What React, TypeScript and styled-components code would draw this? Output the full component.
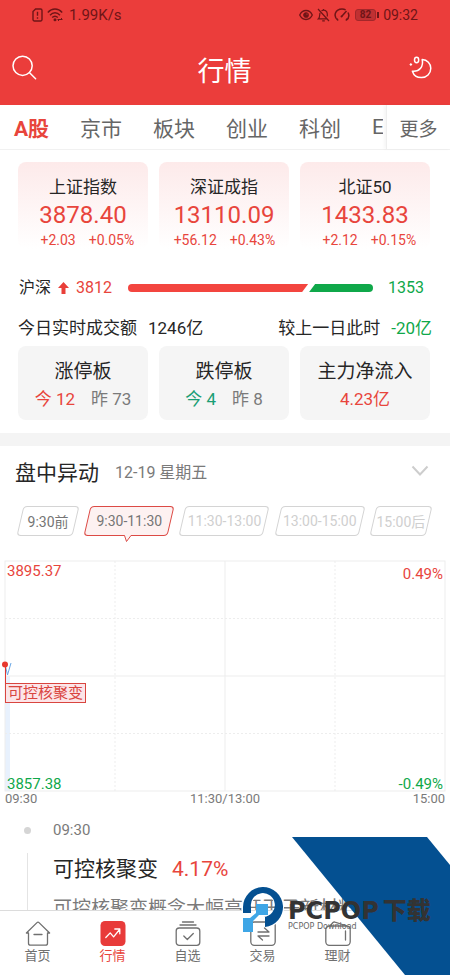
import React from "react";
import styled, { createGlobalStyle } from "styled-components";

const RED = "#e8453c";
const GREEN = "#0fa84a";
const INK = "#262626";
const GREY = "#7a7a7a";

const GlobalStyle = createGlobalStyle`
  *, *::before, *::after { box-sizing: border-box; }
  body {
    margin: 0;
    background: #fff;
    color: ${INK};
    font-family: Roboto, "Noto Sans CJK SC", sans-serif;
  }
  button {
    margin: 0;
    padding: 0;
    border: 0;
    background: none;
    color: inherit;
    font: inherit;
    cursor: pointer;
  }
  h1, h2, h3, p { margin: 0; font-weight: 400; }
  svg { display: block; }
`;

const Screen = styled.div`
  position: relative;
  display: flex;
  flex-direction: column;
  height: 100vh;
  overflow: hidden;
`;

/* ---------- header ---------- */

const Header = styled.header`
  flex: none;
  background: #eb3d3b;
`;

const StatusBar = styled.div`
  display: flex;
  justify-content: space-between;
  height: 30px;
  padding: 0 32px;
  color: #6f1517;
`;

const StatusGroup = styled.div<{ $small?: boolean }>`
  display: flex;
  align-items: center;
  gap: 4px;
  font-size: ${(p) => (p.$small ? 14 : 15)}px;
`;

const StatusText = styled.span`
  padding-left: 2px;
`;

const TitleBar = styled.div`
  display: flex;
  align-items: center;
  justify-content: space-between;
  height: 75px;
  padding: 0 18px 0 12px;
  color: #fff;
`;

const Title = styled.h1`
  padding: 8px 0 0 2px;
  font-size: 27px;
  line-height: 36px;
`;

/* ---------- tabs ---------- */

const TabBar = styled.nav`
  display: flex;
  flex: none;
  height: 45px;
  border-bottom: 1px solid #f1f1f1;
`;

const TabList = styled.div`
  display: flex;
  flex: 1;
  gap: 31px;
  min-width: 0;
  margin-right: 3px;
  padding-left: 14px;
  overflow: hidden;
`;

const Tab = styled.button<{ $active?: boolean }>`
  flex: none;
  color: ${(p) => (p.$active ? RED : "#666")};
  font-size: 21px;
  font-weight: ${(p) => (p.$active ? 700 : 400)};
`;

const MoreTab = styled.button`
  flex: none;
  width: 64px;
  border-left: 1px solid #eee;
  box-shadow: -2px 0 3px rgba(0, 0, 0, 0.04);
  color: #666;
  font-size: 19px;
`;

/* ---------- market overview ---------- */

const Main = styled.main`
  flex: 1;
  min-height: 0;
  overflow: hidden;
`;

const Overview = styled.section`
  padding: 12px 20px 13px 18px;
`;

const CardRow = styled.div`
  display: grid;
  grid-template-columns: repeat(3, 1fr);
  gap: 11px;
`;

const IndexCard = styled.article`
  padding-top: 13px;
  border-radius: 8px;
  background: linear-gradient(#fdeaea, #fff);
  text-align: center;
`;

const IndexName = styled.h2`
  font-size: 17px;
  line-height: 24px;
`;

const IndexValue = styled.div`
  color: ${RED};
  font-size: 24px;
  line-height: 32px;
`;

const IndexChange = styled.div`
  display: flex;
  justify-content: center;
  gap: 13px;
  color: ${RED};
  font-size: 14px;
  line-height: 18px;
`;

const ChangeDiff = styled.span`
  min-width: 44px;
  text-align: right;
`;

const BreadthRow = styled.div`
  display: flex;
  align-items: center;
  margin-top: 27px;
  padding: 0 6px 0 1px;
  font-size: 16px;
  line-height: 24px;
`;

const UpCount = styled.span`
  display: flex;
  align-items: center;
  gap: 7px;
  margin: 0 16px 0 7px;
  color: ${RED};
`;

const DownCount = styled.span`
  margin-left: 15px;
  color: ${GREEN};
`;

const Breadth = styled.div`
  display: flex;
  flex: 1;
  gap: 1px;
  height: 8px;
`;

const UpBar = styled.span`
  border-radius: 4px 0 0 4px;
  background: #f3453f;
  clip-path: polygon(0 0, 100% 0, calc(100% - 6px) 100%, 0 100%);
`;

const DownBar = styled.span`
  border-radius: 0 4px 4px 0;
  background: ${GREEN};
  clip-path: polygon(6px 0, 100% 0, 100% 100%, 0 100%);
`;

const TurnoverRow = styled.div`
  display: flex;
  justify-content: space-between;
  margin: 16px -2px 6px 0;
  font-size: 17px;
  line-height: 24px;
`;

const Pair = styled.span`
  display: flex;
  gap: 11px;
`;

const StatCard = styled.article`
  padding: 14px 0 9px;
  border-radius: 8px;
  background: #f5f5f5;
  text-align: center;
`;

const StatName = styled.h3`
  font-size: 19px;
  line-height: 24px;
`;

const StatValues = styled.div`
  display: flex;
  justify-content: center;
  gap: 16px;
  margin-top: 3px;
  font-size: 17px;
  line-height: 24px;
`;

const Tone = styled.span<{ $color: string }>`
  color: ${(p) => p.$color};
`;

const Band = styled.div`
  height: 13px;
  background: #f4f4f4;
`;

/* ---------- intraday moves ---------- */

const SectionHead = styled.div`
  display: flex;
  align-items: center;
  height: 50px;
  padding: 0 21px 0 15px;
`;

const SectionTitle = styled.h2`
  font-size: 21px;
`;

const SectionDate = styled.span`
  flex: 1;
  margin-left: 16px;
  color: ${GREY};
  font-size: 16px;
`;

const ChipRow = styled.div`
  display: grid;
  grid-template-columns: 2fr 3fr 3fr 3fr 2fr;
  gap: 11px;
  padding: 10px 21px 0 20px;
`;

const Chip = styled.button<{ $state: "past" | "active" | "idle" }>`
  position: relative;
  z-index: 0;
  height: 30px;
  color: ${(p) => (p.$state === "idle" ? "#cfcfcf" : "#757575")};
  font-size: 14px;
  white-space: nowrap;

  &::before {
    content: "";
    position: absolute;
    inset: 0;
    z-index: -1;
    border: 1px solid ${(p) => (p.$state === "active" ? "#dc4a45" : "#d4d4d4")};
    border-radius: 4px;
    background: ${(p) => (p.$state === "active" ? "#fdf1f1" : "#fff")};
    transform: skewX(-13deg);
  }
`;

const ChipPointer = styled.svg`
  position: absolute;
  top: 28px;
  left: 50%;
  margin-left: -7px;
`;

const Chart = styled.figure`
  margin: 25px 5px 0;
`;

const Plot = styled.div`
  position: relative;
  height: 230px;
`;

const PlotSvg = styled.svg`
  width: 100%;
  height: 100%;
  overflow: visible;
`;

const PlotLabels = styled.div<{ $side: "left" | "right" }>`
  position: absolute;
  top: ${(p) => (p.$side === "left" ? 1 : 4)}px;
  bottom: -2px;
  ${(p) => p.$side}: 2px;
  display: flex;
  flex-direction: column;
  justify-content: space-between;
  font-size: 15px;
  line-height: 18px;
  text-align: ${(p) => p.$side};
`;

const PlotTag = styled.span`
  position: absolute;
  top: 122px;
  left: 0;
  padding: 0 2px;
  border: 1px solid #d9453f;
  background: rgba(252, 226, 230, 0.9);
  color: #d9453f;
  font-size: 15px;
  line-height: 18px;
`;

const TimeAxis = styled.figcaption`
  display: flex;
  justify-content: space-between;
  color: ${GREY};
  font-size: 13px;
  line-height: 16px;
`;

const Event = styled.article`
  display: grid;
  grid-template-columns: 7px 1fr;
  column-gap: 22px;
  margin-top: 13px;
  padding: 0 20px 0 24px;
`;

const Rail = styled.div`
  display: flex;
  flex-direction: column;
  align-items: center;
  gap: 19px;
  padding-top: 7px;
`;

const RailDot = styled.span`
  width: 7px;
  height: 7px;
  border-radius: 50%;
  background: #d5d5d5;
`;

const RailLine = styled.span`
  flex: 1;
  width: 1px;
  background: #e4e4e4;
`;

const EventTime = styled.time`
  display: block;
  color: ${GREY};
  font-size: 15px;
  line-height: 20px;
`;

const EventTitle = styled.h3`
  display: flex;
  gap: 14px;
  margin-top: 15px;
  font-size: 21px;
  line-height: 28px;
`;

const EventText = styled.p`
  margin-top: 12px;
  color: ${GREY};
  font-size: 19px;
  line-height: 28px;
  white-space: nowrap;
`;

/* ---------- bottom navigation ---------- */

const BottomNav = styled.nav`
  display: grid;
  flex: none;
  grid-template-columns: repeat(6, 1fr);
  border-top: 1px solid #dcdcdc;
  background: #fff;
`;

const NavItem = styled.button<{ $active?: boolean }>`
  display: flex;
  flex-direction: column;
  align-items: center;
  padding: 10px 0;
  color: ${(p) => (p.$active ? RED : "#707070")};
  font-size: 13px;
  line-height: 19px;
`;

/* ---------- brand overlay ---------- */

const Brand = styled.aside`
  position: absolute;
  right: 0;
  bottom: 0;
  width: 208px;
  height: 138px;
  pointer-events: none;
`;

const BrandArt = styled.svg`
  position: absolute;
  inset: 0;
`;

const BrandText = styled.div`
  position: absolute;
  top: 63px;
  left: 46px;
  color: #333;
  white-space: nowrap;
`;

const BrandName = styled.div`
  display: flex;
  gap: 4px;
  font-family: "DejaVu Sans", "Noto Sans CJK SC", sans-serif;
  font-size: 24px;
  font-weight: 900;
  line-height: 22px;
`;

const BrandSub = styled.div`
  color: #666;
  font-family: "DejaVu Sans", sans-serif;
  font-size: 8px;
  line-height: 10px;
`;

/* ---------- icons ---------- */

const SimIcon = () => (
  <svg width="11" height="14" viewBox="0 0 11 14" fill="none" stroke="currentColor" strokeWidth="1.4">
    <path d="M3.6 1h5A1.4 1.4 0 0 1 10 2.400v9.200A1.400 1.400 0 0 1 8.600 13H2.400A1.400 1.400 0 0 1 1 11.600V3.600z" />
    <path d="M5.500 3.800v4M5.500 9.200v1.500" />
  </svg>
);

const WifiIcon = () => (
  <svg width="16" height="14" viewBox="0 0 16 14" fill="none" stroke="currentColor" strokeWidth="1.400">
    <path d="M.8 4.500C5-.2 11-.2 15.200 4.500M3 7.200c3-3.200 7-3.200 10 0M5.200 9.600c1.700-1.800 3.900-1.800 5.600 0" />
    <circle cx="8" cy="11.800" r=".8" fill="currentColor" />
    <path d="M11 11.500h4M12 13l-1.500-1.500M14 10l1.500 1.500" strokeWidth="1" />
  </svg>
);

const EyeIcon = () => (
  <svg width="14" height="12" viewBox="0 0 14 12" fill="none" stroke="currentColor" strokeWidth="1.300">
    <path d="M.7 6C3.500 0 10.500 0 13.300 6 10.500 12 3.500 12 .7 6z" />
    <circle cx="7" cy="6" r="2.200" fill="currentColor" />
    <circle cx="8" cy="5" r=".6" fill="#eb3d3b" stroke="none" />
  </svg>
);

const BellOffIcon = () => (
  <svg width="13" height="14" viewBox="0 0 13 14" fill="none" stroke="currentColor" strokeWidth="1.200">
    <path d="M4.500 2.800C8 .8 10.300 3.300 10.300 6v2.500M9.500 10.800H1.500c1.500-1.300 1-4.200 1.500-6M5.200 12.800h2.600M6.500 1v1M1 1l11 12" />
  </svg>
);

const GaugeIcon = () => (
  <svg width="16" height="14" viewBox="0 0 16 14" fill="none" stroke="currentColor" strokeWidth="1.500">
    <path d="M4 12.500C-1.500 8 1.500 1 8 1c1.500 0 2.600.3 3.600.9M14 4.500c1.500 3 .8 6-2 8M4 12.500l-1-2M12 12.500l1-2M7.600 8.500L12.500 3" />
    <circle cx="7.500" cy="8.500" r="1" fill="currentColor" stroke="none" />
  </svg>
);

const BatteryFrame = styled.span`
  display: flex;
  align-items: center;
  gap: 1px;
  margin-left: 1px;

  &::after {
    content: "";
    width: 2px;
    height: 6px;
    background: currentColor;
  }
`;

const BatteryLevel = styled.span`
  padding: 0 4px;
  border: 1px solid #a3272a;
  border-radius: 3px;
  background: #c03032;
  font-size: 10px;
  font-weight: 700;
  line-height: 10px;
`;

const SearchIcon = () => (
  <svg width="26" height="26" viewBox="0 0 26 26" fill="none" stroke="currentColor" strokeWidth="1.500" strokeLinecap="round">
    <circle cx="10.600" cy="10.800" r="9.600" />
    <path d="M17.600 17.800l6 6" />
  </svg>
);

const MoonIcon = () => (
  <svg width="23" height="23" viewBox="0 0 23 23" fill="none" stroke="currentColor" strokeWidth="1.500" strokeLinejoin="round">
    <path d="M13.200 3.500c5 .2 8.600 4 8.600 8.800a9.300 9.300 0 0 1-9.400 9.300c-4.200 0-7.800-2.600-9-6.400 7.200.6 11.300-4.600 9.800-11.700z" />
    <ellipse cx="7.600" cy="4" rx="2.100" ry="2.700" />
    <path d="M1.900 7l1.500 1.500-1.500 1.500L.4 8.500z" fill="currentColor" stroke="none" />
  </svg>
);

const ArrowUpIcon = () => (
  <svg width="11" height="12" viewBox="0 0 11 12" fill="#e93f39">
    <path d="M5.500 0L11 6H7.500v6H3.500V6H0z" />
  </svg>
);

const ChevronIcon = () => (
  <svg width="18" height="12" viewBox="0 0 18 12" fill="none" stroke="#cdcdcd" strokeWidth="2">
    <path d="M1.500 1.500L9 9.500l7.500-8" />
  </svg>
);

const navSvg = {
  width: 26,
  height: 25,
  viewBox: "0 0 26 25",
  fill: "none",
  stroke: "currentColor",
  strokeWidth: 1.3,
  strokeLinecap: "round" as const,
  strokeLinejoin: "round" as const,
};

const HomeIcon = () => (
  <svg {...navSvg}>
    <path d="M3.500 12H1.400L12 1.600a1.400 1.400 0 0 1 2 0L24.600 12h-2.100v10.200a2 2 0 0 1-2 2h-15a2 2 0 0 1-2-2zM9 13.500h8" />
  </svg>
);

const MarketIcon = () => (
  <svg {...navSvg}>
    <rect x=".5" y="0" width="25" height="25" rx="4.500" fill="#e83b3a" stroke="none" />
    <path d="M5.800 16.500l4.400-4.600 3.400 4 6-7.400M14.800 8h5v4.800" stroke="#fff" />
  </svg>
);

const WatchlistIcon = () => (
  <svg {...navSvg}>
    <path d="M7.500 1h11M5 4h16M8.800 15l3.500 3.500 6-6" />
    <rect x="1.200" y="7" width="23.600" height="17.300" rx="3" />
  </svg>
);

const TradeIcon = () => (
  <svg {...navSvg}>
    <rect x=".8" y="1" width="24.400" height="23.300" rx="3.500" />
    <path d="M8 11h11l-4.500-4M19 15H8l4.500 4" />
  </svg>
);

const WalletIcon = () => (
  <svg {...navSvg}>
    <rect x=".8" y="5" width="24.400" height="19.300" rx="3.500" />
    <path d="M5 5l3-3.500a2 2 0 0 1 2-.4L22 5M20.500 10v9" />
  </svg>
);

/* ---------- data ---------- */

const tabs = ["A股", "京市", "板块", "创业", "科创", "ETF"];

const indices = [
  { name: "上证指数", value: "3878.40", diff: "+2.03", pct: "+0.05%" },
  { name: "深证成指", value: "13110.09", diff: "+56.12", pct: "+0.43%" },
  { name: "北证50", value: "1433.83", diff: "+2.12", pct: "+0.15%" },
];

const stats = [
  { name: "涨停板", values: [["今 12", RED], ["昨 73", GREY]] },
  { name: "跌停板", values: [["今 4", "#1a9e74"], ["昨 8", GREY]] },
  { name: "主力净流入", values: [["4.23亿", RED]] },
];

const chips: { label: string; state: "past" | "active" | "idle" }[] = [
  { label: "9:30前", state: "past" },
  { label: "9:30-11:30", state: "active" },
  { label: "11:30-13:00", state: "idle" },
  { label: "13:00-15:00", state: "idle" },
  { label: "15:00后", state: "idle" },
];

const navItems = [
  { label: "首页", Icon: HomeIcon },
  { label: "行情", Icon: MarketIcon, active: true },
  { label: "自选", Icon: WatchlistIcon },
  { label: "交易", Icon: TradeIcon },
  { label: "理财", Icon: WalletIcon },
];

const breadth = { up: 3812, down: 1353 };

export default function App() {
  return (
    <>
      <GlobalStyle />
      <Screen>
        <Header>
          <StatusBar>
            <StatusGroup>
              <SimIcon />
              <WifiIcon />
              <StatusText>1.99K/s</StatusText>
            </StatusGroup>
            <StatusGroup $small>
              <EyeIcon />
              <BellOffIcon />
              <GaugeIcon />
              <BatteryFrame>
                <BatteryLevel>82</BatteryLevel>
              </BatteryFrame>
              <span>09:32</span>
            </StatusGroup>
          </StatusBar>
          <TitleBar>
            <button aria-label="搜索"><SearchIcon /></button>
            <Title>行情</Title>
            <button aria-label="夜间模式"><MoonIcon /></button>
          </TitleBar>
        </Header>

        <TabBar>
          <TabList>
            {tabs.map((t, i) => (
              <Tab key={t} $active={i === 0}>{t}</Tab>
            ))}
          </TabList>
          <MoreTab>更多</MoreTab>
        </TabBar>

        <Main>
          <Overview>
            <CardRow>
              {indices.map((x) => (
                <IndexCard key={x.name}>
                  <IndexName>{x.name}</IndexName>
                  <IndexValue>{x.value}</IndexValue>
                  <IndexChange>
                    <ChangeDiff>{x.diff}</ChangeDiff>
                    <span>{x.pct}</span>
                  </IndexChange>
                </IndexCard>
              ))}
            </CardRow>

            <BreadthRow>
              <span>沪深</span>
              <UpCount><ArrowUpIcon />{breadth.up}</UpCount>
              <Breadth>
                <UpBar style={{ flexGrow: breadth.up }} />
                <DownBar style={{ flexGrow: breadth.down }} />
              </Breadth>
              <DownCount>{breadth.down}</DownCount>
            </BreadthRow>

            <TurnoverRow>
              <Pair><span>今日实时成交额</span><span>1246亿</span></Pair>
              <Pair><span>较上一日此时</span><Tone $color={GREEN}>-20亿</Tone></Pair>
            </TurnoverRow>

            <CardRow>
              {stats.map((s) => (
                <StatCard key={s.name}>
                  <StatName>{s.name}</StatName>
                  <StatValues>
                    {s.values.map(([text, color]) => (
                      <Tone key={text} $color={color}>{text}</Tone>
                    ))}
                  </StatValues>
                </StatCard>
              ))}
            </CardRow>
          </Overview>

          <Band />

          <section>
            <SectionHead>
              <SectionTitle>盘中异动</SectionTitle>
              <SectionDate>12-19 星期五</SectionDate>
              <button aria-label="展开"><ChevronIcon /></button>
            </SectionHead>

            <ChipRow>
              {chips.map((c) => (
                <Chip key={c.label} $state={c.state}>
                  {c.label}
                  {c.state === "active" && (
                    <ChipPointer width="12" height="9" viewBox="0 0 12 9">
                      <path d="M1 0v1.500h1.500L4.500 7.500 9 1.500h2V0z" fill="#fdf1f1" />
                      <path d="M1 1.500h1.500L4.500 7.500 9 1.500h2" fill="none" stroke="#dc4a45" />
                    </ChipPointer>
                  )}
                </Chip>
              ))}
            </ChipRow>

            <Chart>
              <Plot>
                <PlotSvg>
                  <rect x="0" y="115" width="5" height="115" fill="#e8f1fd" />
                  <g stroke="#ededed">
                    <rect x="0" y="0" width="100%" height="100%" fill="none" />
                    <line x1="50%" x2="50%" y1="0" y2="100%" />
                    <line x1="0" x2="100%" y1="50%" y2="50%" />
                    <g strokeDasharray="2 2">
                      <line x1="25%" x2="25%" y1="0" y2="100%" />
                      <line x1="75%" x2="75%" y1="0" y2="100%" />
                      <line x1="0" x2="100%" y1="25%" y2="25%" />
                      <line x1="0" x2="100%" y1="75%" y2="75%" />
                    </g>
                  </g>
                  <path d="M0 103L2.500 114L6 102" fill="none" stroke="#69a7e6" />
                  <path d="M.5 103V123" stroke="#e2382f" />
                  <circle cx="0" cy="103.500" r="3" fill="#e8392f" />
                </PlotSvg>
                <PlotLabels $side="left">
                  <Tone $color={RED}>3895.37</Tone>
                  <Tone $color={GREEN}>3857.38</Tone>
                </PlotLabels>
                <PlotLabels $side="right">
                  <Tone $color={RED}>0.49%</Tone>
                  <Tone $color={GREEN}>-0.49%</Tone>
                </PlotLabels>
                <PlotTag>可控核聚变</PlotTag>
              </Plot>
              <TimeAxis>
                <span>09:30</span>
                <span>11:30/13:00</span>
                <span>15:00</span>
              </TimeAxis>
            </Chart>

            <Event>
              <Rail><RailDot /><RailLine /></Rail>
              <div>
                <EventTime>09:30</EventTime>
                <EventTitle>
                  可控核聚变<Tone $color={RED}>4.17%</Tone>
                </EventTitle>
                <EventText>可控核聚变概念大幅高开王子新材料</EventText>
              </div>
            </Event>
          </section>
        </Main>

        <BottomNav>
          {navItems.map(({ label, Icon, active }) => (
            <NavItem key={label} $active={active}>
              <Icon />
              {label}
            </NavItem>
          ))}
        </BottomNav>

        <Brand>
          <BrandArt width="208" height="138" viewBox="0 0 208 138">
            <path d="M50 0H185L208 28V138H163z" fill="#045091" />
            <path d="M4.500 76V70a16.500 16.500 0 1 1 20 16.300" fill="none" stroke="#fff" strokeWidth="9" />
            <path d="M1 76V70a20 20 0 1 1 22 20V80h-1a12 12 0 1 0-13-10v6z" fill="#045091" />
            <path d="M14 67H26V78H17L11 84V95H1V81H8L14 76z" fill="#3ea6e6" />
          </BrandArt>
          <BrandText>
            <BrandName><span>PCPOP</span><span>下载</span></BrandName>
            <BrandSub>PCPOP Download</BrandSub>
          </BrandText>
        </Brand>
      </Screen>
    </>
  );
}
